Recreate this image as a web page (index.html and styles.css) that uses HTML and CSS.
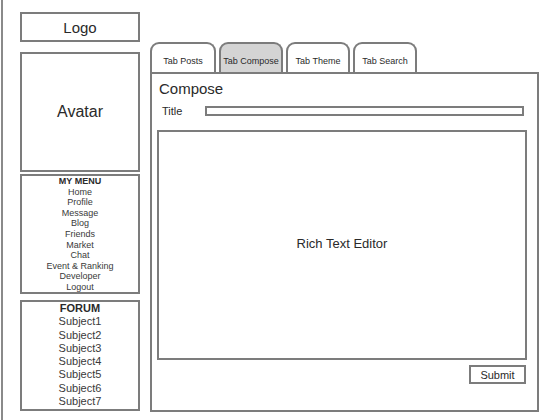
FILE: index.html
```html
<!DOCTYPE html>
<html lang="en">
<head>
    <meta charset="UTF-8">
    <meta name="viewport" content="width=device-width, initial-scale=1.0">
    <title>Compose</title>
    <link rel="stylesheet" href="styles.css">
</head>
<body>
    <div class="page">
        <div class="sidebar">
            <div class="box logo">Logo</div>
            <div class="box avatar">Avatar</div>
            <div class="box menu">
                <div class="box-title">MY MENU</div>
                <div>Home</div>
                <div>Profile</div>
                <div>Message</div>
                <div>Blog</div>
                <div>Friends</div>
                <div>Market</div>
                <div>Chat</div>
                <div>Event &amp; Ranking</div>
                <div>Developer</div>
                <div>Logout</div>
            </div>
            <div class="box forum">
                <div class="box-title">FORUM</div>
                <div>Subject1</div>
                <div>Subject2</div>
                <div>Subject3</div>
                <div>Subject4</div>
                <div>Subject5</div>
                <div>Subject6</div>
                <div>Subject7</div>
            </div>
        </div>

        <div class="main">
            <div class="tabs">
                <div class="tab">Tab Posts</div>
                <div class="tab active">Tab Compose</div>
                <div class="tab">Tab Theme</div>
                <div class="tab">Tab Search</div>
            </div>
            <div class="panel">
                <h2>Compose</h2>
                <div class="title-row">
                    <label>Title</label>
                    <div class="input"></div>
                </div>
                <div class="editor">Rich Text Editor</div>
                <div class="actions">
                    <button class="submit">Submit</button>
                </div>
            </div>
        </div>
    </div>
</body>
</html>
```

FILE: styles.css
```css
* {
    box-sizing: border-box;
}
body {
    font-family: "Liberation Sans", Arial, sans-serif;
    margin: 0;
    padding-left: 1px;
    background-color: #ffffff;
    color: #2a2a2a;
}
.page {
    display: flex;
    min-height: 100vh;
    border-left: 2px solid #8a8a8a;
}
.sidebar {
    width: 120px;
    margin-left: 17px;
    padding-top: 12px;
}
.box {
    border: 2px solid #7c7c7c;
    text-align: center;
}
.logo {
    height: 30px;
    display: flex;
    align-items: center;
    justify-content: center;
    font-size: 15px;
}
.avatar {
    height: 120px;
    margin-top: 10px;
    display: flex;
    align-items: center;
    justify-content: center;
    font-size: 16px;
}
.menu {
    height: 120px;
    margin-top: 2px;
    font-size: 9px;
    line-height: 10.6px;
    color: #3a3a3a;
}
.forum {
    height: 111px;
    margin-top: 6px;
    font-size: 11px;
    line-height: 13.3px;
    color: #3a3a3a;
}
.box-title {
    font-weight: bold;
    color: #2a2a2a;
}
.main {
    width: 389px;
    margin-left: 10px;
    padding-top: 42px;
}
.tabs {
    display: flex;
    gap: 3px;
}
.tab {
    width: 64px;
    height: 30px;
    padding-top: 5px;
    display: flex;
    align-items: center;
    justify-content: center;
    font-size: 9px;
    border: 2px solid #7c7c7c;
    border-bottom: none;
    border-radius: 9px 9px 0 0;
    background-color: #ffffff;
}
.tab:first-child {
    width: 66px;
}
.tab.active {
    background-color: #d4d4d4;
}
.panel {
    height: 340px;
    border: 2px solid #7c7c7c;
    padding: 6px 10px 0 5px;
}
.panel h2 {
    margin: 0;
    padding-left: 2px;
    font-size: 15px;
    font-weight: normal;
    line-height: 18px;
}
.title-row {
    display: flex;
    align-items: center;
    height: 18px;
    margin-top: 4px;
    padding-left: 5px;
    font-size: 11px;
}
.title-row label {
    width: 43px;
}
.input {
    width: 319px;
    height: 10px;
    border: 2px solid #7c7c7c;
}
.editor {
    height: 230px;
    margin-top: 10px;
    padding-bottom: 4px;
    border: 2px solid #7c7c7c;
    display: flex;
    align-items: center;
    justify-content: center;
    font-size: 13px;
}
.actions {
    display: flex;
    justify-content: flex-end;
    margin-top: 5px;
    padding-right: 1px;
}
.submit {
    width: 57px;
    height: 19px;
    padding: 0;
    font-family: inherit;
    font-size: 11px;
    color: #2a2a2a;
    background-color: #ffffff;
    border: 2px solid #7c7c7c;
    border-radius: 0;
}
```
